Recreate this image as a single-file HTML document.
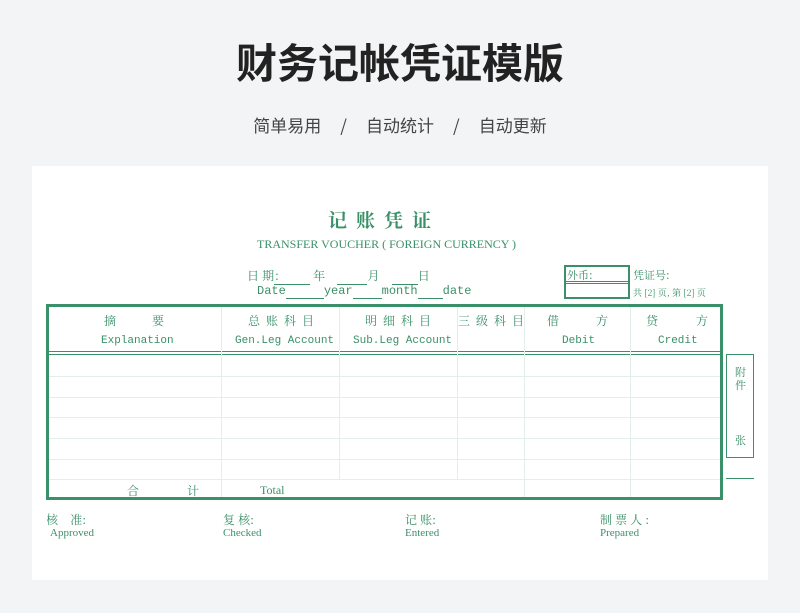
<!DOCTYPE html>
<html><head><meta charset="utf-8"><style>
*{margin:0;padding:0;box-sizing:border-box}
body{width:800px;height:613px;background:#f3f4f6;position:relative;overflow:hidden;font-family:"Liberation Sans","Noto Sans CJK SC",sans-serif}
.a{position:absolute;white-space:nowrap}
.g{color:#3a9068;font-family:"Liberation Mono","Noto Serif CJK SC",monospace}
.s{font-family:"Noto Serif CJK SC","Liberation Serif",serif;color:#3a9068}
.hl{position:absolute;height:1px;background:#e4efe9}
.vl{position:absolute;width:1px;background:#e4efe9}
</style></head><body>
<div class="a" style="left:0;width:800px;top:34px;text-align:center;font-size:41px;font-weight:bold;color:#222;font-family:'Noto Sans CJK SC',sans-serif;line-height:52px">财务记帐凭证模版</div>
<div class="a" style="left:0;width:800px;top:113px;text-align:center;font-size:17px;color:#444;font-family:'Noto Sans CJK SC',sans-serif;line-height:24px">简单易用&nbsp;&nbsp;&nbsp;&nbsp;&nbsp;/&nbsp;&nbsp;&nbsp;&nbsp;&nbsp;自动统计&nbsp;&nbsp;&nbsp;&nbsp;&nbsp;/&nbsp;&nbsp;&nbsp;&nbsp;&nbsp;自动更新</div>
<div class="a" style="left:32px;top:166px;width:736px;height:414px;background:#fff"></div>

<div class="a s" style="left:328px;top:206px;font-size:19px;font-weight:bold;letter-spacing:9px">记账凭证</div>
<div class="a g" style="left:257px;top:237px;font-size:12px;font-family:'Liberation Serif',serif">TRANSFER VOUCHER ( FOREIGN CURRENCY )</div>

<div class="a s" style="left:247px;top:267px;font-size:12px">日 期<span style="display:inline-block;width:36px;border-bottom:1px solid #3a9068">：</span> 年 &nbsp;&nbsp;&nbsp;<span style="display:inline-block;width:30px;border-bottom:1px solid #3a9068">&nbsp;</span>月 &nbsp;&nbsp;&nbsp;<span style="display:inline-block;width:26px;border-bottom:1px solid #3a9068">&nbsp;</span>日</div>
<div class="a g" style="left:257px;top:284px;font-size:12px;font-family:'Liberation Mono',monospace">Date<span style="display:inline-block;width:38px;border-bottom:1px solid #3a9068">&nbsp;</span>year<span style="display:inline-block;width:29px;border-bottom:1px solid #3a9068">&nbsp;</span>month<span style="display:inline-block;width:25px;border-bottom:1px solid #3a9068">&nbsp;</span>date</div>

<div class="a" style="left:564px;top:265px;width:66px;height:34px;border:2px solid #3a9068"></div>
<div class="a" style="left:564px;top:281px;width:66px;height:3px;border-top:1px solid #3a9068;border-bottom:1px solid #3a9068"></div>
<div class="a s" style="left:567px;top:267px;font-size:11px">外币:</div>
<div class="a s" style="left:633px;top:267px;font-size:11px">凭证号:</div>
<div class="a s" style="left:633px;top:286px;font-size:9px">共 [2] 页, 第 [2] 页</div>
<div class="a" style="left:722px;top:280px;width:46px;height:20px;background:#fff"></div>

<!-- table -->
<div class="a" style="left:46px;top:304px;width:677px;height:196px;border:3px solid #3a9068"></div>
<div class="a" style="left:49px;top:351px;width:671px;height:4px;border-top:1px solid #3a9068;border-bottom:1px solid #3a9068"></div>
<div class="vl" style="left:221px;top:307px;height:190px"></div>
<div class="vl" style="left:339px;top:307px;height:172px"></div>
<div class="vl" style="left:457px;top:307px;height:172px"></div>
<div class="vl" style="left:524px;top:307px;height:190px"></div>
<div class="vl" style="left:630px;top:307px;height:190px"></div>
<div class="hl" style="left:49px;top:376px;width:671px"></div>
<div class="hl" style="left:49px;top:397px;width:671px"></div>
<div class="hl" style="left:49px;top:417px;width:671px"></div>
<div class="hl" style="left:49px;top:438px;width:671px"></div>
<div class="hl" style="left:49px;top:459px;width:671px"></div>
<div class="hl" style="left:49px;top:479px;width:671px"></div>

<div class="a s" style="left:104px;top:312px;font-size:12px;letter-spacing:36px">摘要</div>
<div class="a s" style="left:248px;top:312px;font-size:12px;letter-spacing:6px">总账科目</div>
<div class="a s" style="left:365px;top:312px;font-size:12px;letter-spacing:6px">明细科目</div>
<div class="a s" style="left:458px;top:312px;font-size:12px;letter-spacing:6px">三级科目</div>
<div class="a s" style="left:547px;top:312px;font-size:12px">借</div>
<div class="a s" style="left:596px;top:312px;font-size:12px">方</div>
<div class="a s" style="left:646px;top:312px;font-size:12px">贷</div>
<div class="a s" style="left:696px;top:312px;font-size:12px">方</div>
<div class="a g" style="left:101px;top:335px;font-size:11px">Explanation</div>
<div class="a g" style="left:235px;top:335px;font-size:11px">Gen.Leg Account</div>
<div class="a g" style="left:353px;top:335px;font-size:11px">Sub.Leg Account</div>
<div class="a g" style="left:562px;top:335px;font-size:11px">Debit</div>
<div class="a g" style="left:658px;top:335px;font-size:11px">Credit</div>
<div class="a s" style="left:127px;top:482px;font-size:12px">合</div>
<div class="a s" style="left:187px;top:482px;font-size:12px">计</div>
<div class="a g" style="left:260px;top:483px;font-size:12px;font-family:'Liberation Serif',serif">Total</div>

<div class="a" style="left:726px;top:354px;width:28px;height:104px;border:1px solid #3a9068"></div>
<div class="a s" style="left:735px;top:366px;font-size:11px;line-height:13px">附<br>件</div>
<div class="a s" style="left:735px;top:432px;font-size:11px">张</div>
<div class="a" style="left:726px;top:478px;width:28px;height:1px;background:#3a9068"></div>

<div class="a s" style="left:46px;top:511px;font-size:12px">核&nbsp;&nbsp;&nbsp;&nbsp;准:</div>
<div class="a" style="left:32px;top:508px;width:15px;height:20px;background:#fff"></div>
<div class="a g" style="left:50px;top:527px;font-size:11px;font-family:'Liberation Serif',serif">Approved</div>
<div class="a s" style="left:223px;top:511px;font-size:12px">复 核:</div>
<div class="a g" style="left:223px;top:527px;font-size:11px;font-family:'Liberation Serif',serif">Checked</div>
<div class="a s" style="left:405px;top:511px;font-size:12px">记 账:</div>
<div class="a g" style="left:405px;top:527px;font-size:11px;font-family:'Liberation Serif',serif">Entered</div>
<div class="a s" style="left:600px;top:511px;font-size:12px">制 票 人 :</div>
<div class="a g" style="left:600px;top:527px;font-size:11px;font-family:'Liberation Serif',serif">Prepared</div>
</body></html>
